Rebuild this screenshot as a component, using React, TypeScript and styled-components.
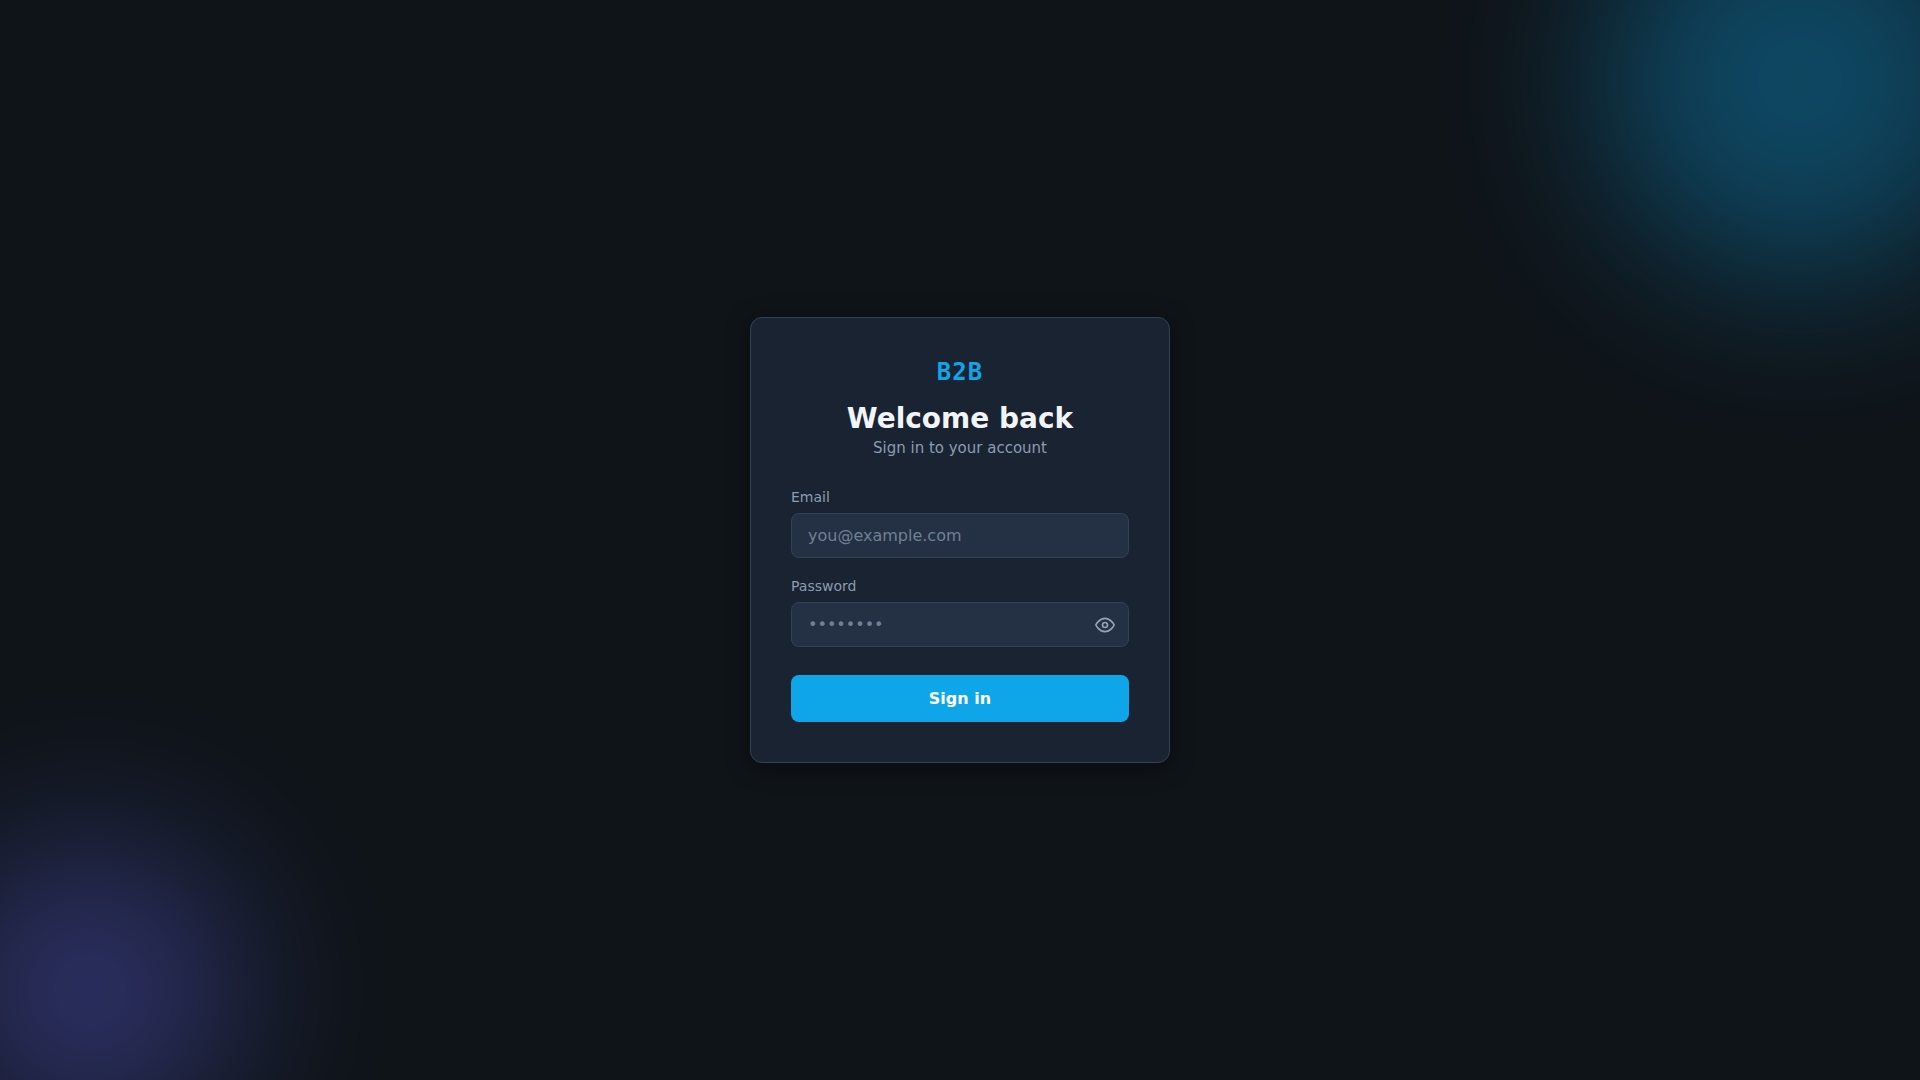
import React, { useState } from "react";
import styled, { createGlobalStyle } from "styled-components";

const GlobalStyle = createGlobalStyle`
  *, *::before, *::after { box-sizing: border-box; }
  body {
    margin: 0;
    background: #0f1419;
    color: #f1f5f9;
    font-family: "DejaVu Sans", sans-serif;
  }
`;

const Page = styled.main`
  position: relative;
  display: flex;
  align-items: center;
  justify-content: center;
  min-height: 100vh;
  padding: 24px;
  overflow: hidden;
`;

const Glow = styled.div<{ $size: number; $color: string }>`
  position: absolute;
  width: ${(p) => p.$size}px;
  height: ${(p) => p.$size}px;
  border-radius: 50%;
  background: ${(p) => p.$color};
  filter: blur(80px);
  opacity: 0.35;
  pointer-events: none;
`;

const SkyGlow = styled(Glow)`
  top: -120px;
  right: -80px;
`;

const IndigoGlow = styled(Glow)`
  bottom: -60px;
  left: -60px;
`;

const Card = styled.section`
  position: relative;
  width: 100%;
  max-width: 420px;
  padding: 40px;
  background: #1a2332;
  border: 1px solid #334155;
  border-radius: 12px;
  box-shadow: 0 4px 24px rgba(0, 0, 0, 0.4);
`;

const Header = styled.header`
  margin-bottom: 32px;
  text-align: center;
`;

const Logo = styled.div`
  margin-bottom: 16px;
  color: #0ea5e9;
  font-family: "DejaVu Sans Mono", monospace;
  font-size: 24px;
  font-weight: 700;
  line-height: 28px;
  letter-spacing: 1px;
`;

const Title = styled.h1`
  margin: 0 0 4px;
  font-size: 28px;
  font-weight: 700;
  line-height: 33px;
`;

const Subtitle = styled.p`
  margin: 0;
  color: #8b9cb0;
  font-size: 15px;
  line-height: 18px;
`;

const Form = styled.form`
  display: flex;
  flex-direction: column;
  gap: 20px;
`;

const Field = styled.div`
  display: flex;
  flex-direction: column;
  gap: 8px;
`;

const Label = styled.label`
  color: #8b9cb0;
  font-size: 14px;
  line-height: 16px;
`;

const InputWrap = styled.div`
  position: relative;
`;

const Input = styled.input<{ $withToggle?: boolean }>`
  display: block;
  width: 100%;
  padding: 12px ${(p) => (p.$withToggle ? 48 : 16)}px 12px 16px;
  background: #243044;
  border: 1px solid #334155;
  border-radius: 8px;
  color: #f1f5f9;
  font-family: inherit;
  font-size: 16px;
  line-height: 19px;
  outline: none;

  &::placeholder { color: #708094; }
  &:focus { border-color: #0ea5e9; }
`;

const Toggle = styled.button`
  position: absolute;
  top: 0;
  right: 8px;
  bottom: 0;
  display: flex;
  align-items: center;
  padding: 0 6px;
  background: none;
  border: 0;
  color: #94a3b8;
  cursor: pointer;
`;

const Submit = styled.button`
  margin-top: 8px;
  padding: 14px 24px;
  background: #0ea5e9;
  border: 0;
  border-radius: 8px;
  color: #fff;
  font-family: inherit;
  font-size: 16px;
  font-weight: 600;
  line-height: 19px;
  cursor: pointer;
`;

const EyeIcon = () => (
  <svg width="20" height="20" viewBox="0 0 24 24" fill="none" stroke="currentColor" strokeWidth="2" strokeLinecap="round" strokeLinejoin="round" aria-hidden="true">
    <path d="M1 12s4-8 11-8 11 8 11 8-4 8-11 8-11-8-11-8z" />
    <circle cx="12" cy="12" r="3" />
  </svg>
);

export default function App() {
  const [visible, setVisible] = useState(false);

  return (
    <>
      <GlobalStyle />
      <Page>
        <SkyGlow $size={400} $color="#0ea5e9" />
        <IndigoGlow $size={300} $color="#6366f1" />
        <Card>
          <Header>
            <Logo>B2B</Logo>
            <Title>Welcome back</Title>
            <Subtitle>Sign in to your account</Subtitle>
          </Header>
          <Form onSubmit={(e) => e.preventDefault()}>
            <Field>
              <Label htmlFor="email">Email</Label>
              <Input id="email" type="email" placeholder="you@example.com" autoComplete="email" />
            </Field>
            <Field>
              <Label htmlFor="password">Password</Label>
              <InputWrap>
                <Input
                  id="password"
                  type={visible ? "text" : "password"}
                  placeholder="••••••••"
                  autoComplete="current-password"
                  $withToggle
                />
                <Toggle
                  type="button"
                  aria-label={visible ? "Hide password" : "Show password"}
                  onClick={() => setVisible(!visible)}
                >
                  <EyeIcon />
                </Toggle>
              </InputWrap>
            </Field>
            <Submit type="submit">Sign in</Submit>
          </Form>
        </Card>
      </Page>
    </>
  );
}
